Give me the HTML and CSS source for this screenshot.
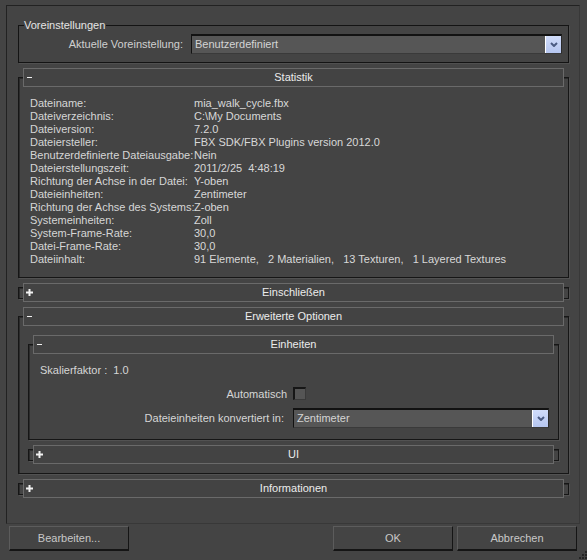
FILE: index.html
```html
<!DOCTYPE html>
<html>
<head>
<meta charset="utf-8">
<link rel="stylesheet" href="styles.css">
</head>
<body>
<div class="frame">
  <div class="group">
    <div class="legend">Voreinstellungen</div>
    <div class="preset-row">
      <span class="preset-label">Aktuelle Voreinstellung:</span>
      <div class="combo combo-preset">
        <span class="combo-text">Benutzerdefiniert</span>
        <span class="combo-btn"><svg width="8" height="5" viewBox="0 0 8 5"><polyline points="1,1 4,4 7,1" fill="none" stroke="#4b5b82" stroke-width="2"/></svg></span>
      </div>
    </div>
  </div>

  <div class="rollout stats-roll">
    <div class="rhead"><span class="minus"></span><span class="rtitle">Statistik</span></div>
    <div class="stats">
      <div class="srow"><span class="sk">Dateiname:</span><span class="sv">mia_walk_cycle.fbx</span></div>
      <div class="srow"><span class="sk">Dateiverzeichnis:</span><span class="sv">C:\My Documents</span></div>
      <div class="srow"><span class="sk">Dateiversion:</span><span class="sv">7.2.0</span></div>
      <div class="srow"><span class="sk">Dateiersteller:</span><span class="sv">FBX SDK/FBX Plugins version 2012.0</span></div>
      <div class="srow"><span class="sk">Benutzerdefinierte Dateiausgabe:</span><span class="sv">Nein</span></div>
      <div class="srow"><span class="sk">Dateierstellungszeit:</span><span class="sv">2011/2/25&nbsp;&nbsp;4:48:19</span></div>
      <div class="srow"><span class="sk">Richtung der Achse in der Datei:</span><span class="sv">Y-oben</span></div>
      <div class="srow"><span class="sk">Dateieinheiten:</span><span class="sv">Zentimeter</span></div>
      <div class="srow"><span class="sk">Richtung der Achse des Systems:</span><span class="sv">Z-oben</span></div>
      <div class="srow"><span class="sk">Systemeinheiten:</span><span class="sv">Zoll</span></div>
      <div class="srow"><span class="sk">System-Frame-Rate:</span><span class="sv">30,0</span></div>
      <div class="srow"><span class="sk">Datei-Frame-Rate:</span><span class="sv">30,0</span></div>
      <div class="srow"><span class="sk">Dateiinhalt:</span><span class="sv">91 Elemente,&nbsp;&nbsp;&nbsp;2 Materialien,&nbsp;&nbsp;&nbsp;13 Texturen,&nbsp;&nbsp;&nbsp;1 Layered Textures</span></div>
    </div>
  </div>

  <div class="rollout closed gap9">
    <div class="rhead"><span class="plus"><svg width="7" height="7" viewBox="0 0 7 7"><rect x="0" y="2.5" width="7" height="2" fill="#f2f2f2"/><rect x="2.5" y="0" width="2" height="7" fill="#f2f2f2"/></svg></span><span class="rtitle">Einschließen</span></div>
  </div>

  <div class="rollout adv-roll">
    <div class="rhead"><span class="minus"></span><span class="rtitle">Erweiterte Optionen</span></div>
    <div class="rollout inner units-roll">
      <div class="rhead"><span class="minus"></span><span class="rtitle">Einheiten</span></div>
      <div class="scale-row">Skalierfaktor :&nbsp; 1.0</div>
      <div class="form-row auto-row">
        <span class="flabel">Automatisch</span>
        <span class="checkbox"></span>
      </div>
      <div class="form-row conv-row">
        <span class="flabel">Dateieinheiten konvertiert in:</span>
        <div class="combo combo-units">
          <span class="combo-text">Zentimeter</span>
          <span class="combo-btn"><svg width="8" height="5" viewBox="0 0 8 5"><polyline points="1,1 4,4 7,1" fill="none" stroke="#4b5b82" stroke-width="2"/></svg></span>
        </div>
      </div>
    </div>
    <div class="rollout inner closed gap9">
      <div class="rhead"><span class="plus"><svg width="7" height="7" viewBox="0 0 7 7"><rect x="0" y="2.5" width="7" height="2" fill="#f2f2f2"/><rect x="2.5" y="0" width="2" height="7" fill="#f2f2f2"/></svg></span><span class="rtitle">UI</span></div>
    </div>
  </div>

  <div class="rollout closed gap9">
    <div class="rhead"><span class="plus"><svg width="7" height="7" viewBox="0 0 7 7"><rect x="0" y="2.5" width="7" height="2" fill="#f2f2f2"/><rect x="2.5" y="0" width="2" height="7" fill="#f2f2f2"/></svg></span><span class="rtitle">Informationen</span></div>
  </div>
</div>

<div class="footer">
  <button class="btn btn-edit">Bearbeiten...</button>
  <span class="spacer"></span>
  <button class="btn">OK</button>
  <button class="btn btn-cancel">Abbrechen</button>
  <span class="grip"><svg width="9" height="9" viewBox="0 0 9 9">
    <rect x="7" y="1" width="2" height="2" fill="#262626"/>
    <rect x="4" y="4" width="2" height="2" fill="#262626"/>
    <rect x="7" y="4" width="2" height="2" fill="#262626"/>
    <rect x="1" y="7" width="2" height="2" fill="#262626"/>
    <rect x="4" y="7" width="2" height="2" fill="#262626"/>
    <rect x="7" y="7" width="2" height="2" fill="#262626"/>
  </svg></span>
</div>
</body>
</html>
```

FILE: styles.css
```css
html, body {
  margin: 0;
  padding: 0;
  background: #444444;
}
body {
  width: 587px;
  height: 560px;
  overflow: hidden;
  font-family: "Liberation Sans", Arial, sans-serif;
  font-size: 11px;
  color: #d6d6d6;
}

.frame {
  box-sizing: border-box;
  margin: 5px 0 0 6px;
  width: 574px;
  height: 519px;
  border-top: 1px solid #222;
  border-left: 1px solid #222;
  border-right: 1px solid #383838;
  border-bottom: 1px solid #383838;
  padding: 0 10px 0 11px;
  display: flex;
  flex-direction: column;
}

/* group box */
.group {
  margin-top: 19px;
  height: 38px;
  box-sizing: border-box;
  border: 1px solid #141414;
  box-shadow: 1px 1px 0 #505050;
  display: flex;
  flex-direction: column;
  align-items: flex-start;
}
.legend {
  margin: -7px 0 0 5px;
  line-height: 13px;
  height: 13px;
  background: #444;
  color: #e4e4e4;
  padding-right: 1px;
}
.preset-row {
  margin-top: 2px;
  align-self: stretch;
  display: flex;
  justify-content: flex-end;
  align-items: center;
  padding-right: 6px;
  gap: 8px;
}
.preset-label { color: #d0d0d0; }

/* combobox */
.combo {
  box-sizing: border-box;
  height: 20px;
  display: flex;
  align-items: stretch;
  background: #565656;
  border-top: 2px solid #121212;
  border-left: 1px solid #121212;
  border-right: 1px solid #2a2a2a;
  border-bottom: 1px solid #3a3a3a;
}
.combo-preset { width: 371px; }
.combo-units { width: 256px; }
.combo-text {
  flex: 1;
  padding-left: 3px;
  line-height: 16px;
  color: #d4d4d4;
}
.combo-btn {
  width: 15px;
  border-left: 1px solid #ffffff;
  background: linear-gradient(#d0dcfa, #b6c6f0);
  display: flex;
  align-items: center;
  justify-content: center;
}

/* rollouts */
.rollout {
  box-sizing: border-box;
  border: 1px solid #161616;
  box-shadow: 1px 1px 0 #525252, inset 1px 1px 0 #2c2c2c;
  display: flex;
  flex-direction: column;
}
.stats-roll { margin-top: 14px; }
.gap9 { margin-top: 9px; }
.adv-roll { margin-top: 17px; padding-bottom: 12px; }
.inner { margin-left: 9px; margin-right: 9px; }
.units-roll { margin-top: 18px; padding-bottom: 11px; }

.rollout.closed {
  height: 12px;
}
.rhead {
  box-sizing: border-box;
  flex: 0 0 19px;
  height: 19px;
  margin: -10px 4px 0;
  border: 1px solid #6a6a6a;
  background: #434343;
  display: grid;
  grid-template-columns: 1fr;
  align-items: center;
}
.closed .rhead { margin-top: -5px; }
.rhead > * { grid-area: 1 / 1; }
.rtitle {
  justify-self: center;
  color: #ececec;
  line-height: 17px;
}
.minus {
  justify-self: start;
  margin-left: 3px;
  width: 5px;
  height: 1px;
  background: #f2f2f2;
}
.plus {
  justify-self: start;
  margin-left: 2px;
  width: 7px;
  height: 7px;
  display: flex;
}

/* statistics */
.stats {
  margin-top: 10px;
  padding: 0 0 11px 11px;
}
.srow {
  display: flex;
  height: 13px;
  line-height: 13px;
  white-space: nowrap;
}
.sk { width: 164px; flex: 0 0 164px; }
.sv { color: #d8d8d8; }

/* units */
.scale-row {
  margin-top: 10px;
  padding-left: 11px;
  height: 13px;
  line-height: 13px;
}
.form-row {
  display: flex;
  align-items: center;
}
.flabel { text-align: right; }
.auto-row { margin-top: 10px; height: 13px; }
.auto-row .flabel { width: 258px; margin-right: 6px; }
.conv-row { margin-top: 8px; height: 20px; }
.conv-row .flabel { width: 255px; margin-right: 9px; }
.checkbox {
  box-sizing: border-box;
  width: 13px;
  height: 13px;
  background: #555;
  border-top: 2px solid #161616;
  border-left: 2px solid #161616;
  border-right: 1px solid #3a3a3a;
  border-bottom: 1px solid #3a3a3a;
}

/* footer */
.footer {
  margin-top: 2px;
  height: 34px;
  display: flex;
  align-items: flex-start;
  padding-left: 9px;
}
.spacer { flex: 1; }
.btn {
  box-sizing: border-box;
  width: 120px;
  height: 25px;
  margin: 0;
  padding: 0;
  background: #444;
  color: #c8c8c8;
  font-family: "Liberation Sans", Arial, sans-serif;
  font-size: 11px;
  border-top: 1px solid #5c5c5c;
  border-left: 1px solid #5c5c5c;
  border-right: 1px solid #151515;
  border-bottom: 2px solid #151515;
}
.btn-cancel { margin-left: 4px; }
.grip {
  align-self: flex-end;
  width: 10px;
  height: 10px;
  display: flex;
  justify-content: flex-end;
}
```
